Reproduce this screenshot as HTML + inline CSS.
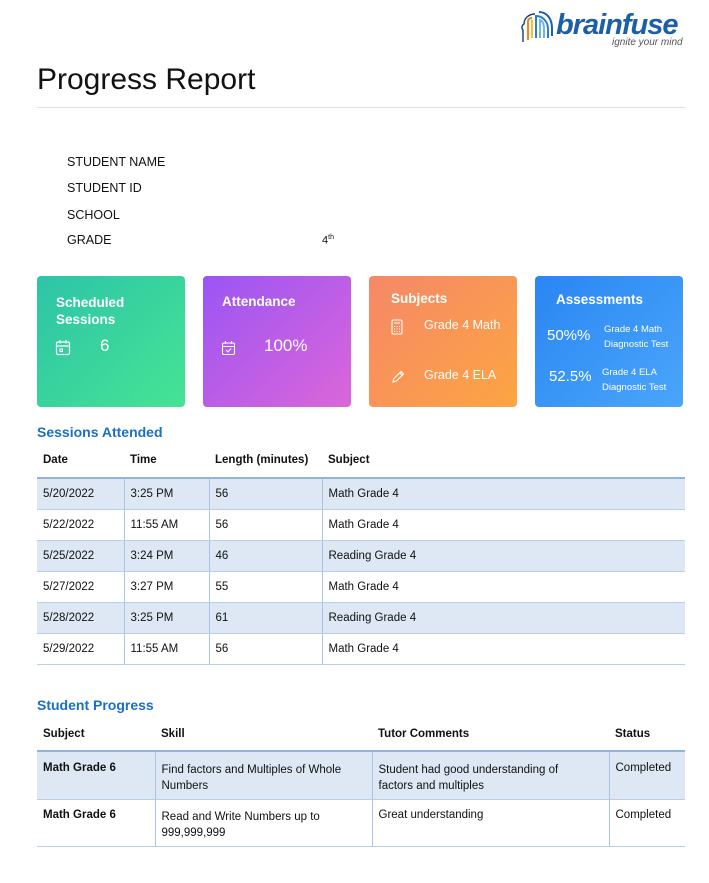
<!DOCTYPE html>
<html><head><meta charset="utf-8"><style>
*{margin:0;padding:0;box-sizing:border-box}
body{width:709px;height:883px;background:#fff;font-family:"Liberation Sans",sans-serif;color:#111;position:relative;overflow:hidden}
.a{position:absolute;white-space:nowrap}
.card{position:absolute;top:276px;width:148px;height:131px;border-radius:4px;color:#fff}
.ct{font-weight:bold;font-size:13.5px;position:absolute}
.h{color:#1a6fc6;font-weight:bold;font-size:14px}
table{position:absolute;border-collapse:collapse;font-size:11.5px;left:37px;width:648px}
td,th{text-align:left;padding:0 6px;vertical-align:top}
th{font-weight:bold}
tr.hd th{border-bottom:2px solid #8fb4de}
tr.s td{background:#dde8f4}
td{border-bottom:1px solid #b9cfe9;border-left:1px solid #a9c4e6}
td:first-child{border-left:none}
</style></head><body>
<!-- logo -->
<svg class="a" style="left:517px;top:8px" width="40" height="40" viewBox="0 0 40 40">
<path d="M6 34 V22 C4 20 5 17 7 16 C7 10 12 6 18 6" fill="none" stroke="#1a3d7c" stroke-width="1.4"/>
<path d="M11 32 V14 C11 11 13 10 15 10" fill="none" stroke="#e0902a" stroke-width="2.2"/>
<path d="M15 30 V12" fill="none" stroke="#f0c040" stroke-width="2.2"/>
<path d="M19 30 V8 C26 8 31 14 31 21 V30" fill="none" stroke="#2a7ed0" stroke-width="2"/>
<path d="M23 30 V12 C26 13 27 17 27 21 V30" fill="none" stroke="#6fb5ea" stroke-width="2"/>
<path d="M22 4 C30 4 35 11 35 20 V28" fill="none" stroke="#1e5fb0" stroke-width="2"/>
</svg>
<div class="a" style="left:556px;top:9px;font-size:29px;font-weight:bold;font-style:italic;color:#1a5fa8;letter-spacing:-1px">brainfuse</div>
<div class="a" style="left:612px;top:37px;font-size:10px;font-style:italic;color:#555">ignite your mind</div>
<div class="a" style="left:37px;top:63px;font-size:30px;color:#111">Progress Report</div>
<div class="a" style="left:37px;top:107px;width:648px;height:1px;background:#ddd"></div>
<div class="a" style="left:67px;top:155px;font-size:12.5px">STUDENT NAME</div>
<div class="a" style="left:67px;top:181px;font-size:12.5px">STUDENT ID</div>
<div class="a" style="left:67px;top:208px;font-size:12.5px">SCHOOL</div>
<div class="a" style="left:67px;top:233px;font-size:12.5px">GRADE</div>
<div class="a" style="left:322px;top:234px;font-size:11px">4<sup style="font-size:7px">th</sup></div>

<div class="card" style="left:37px;background:linear-gradient(135deg,#2ec4a8,#44e494)">
<div class="ct" style="left:19px;top:18px;line-height:17px">Scheduled<br>Sessions</div>
<svg class="a" style="left:18px;top:63px" width="16" height="17" viewBox="0 0 16 17"><rect x="1.5" y="3" width="13" height="12.5" rx="1.5" fill="none" stroke="#fff" stroke-width="1.2"/><path d="M1.5 7H14.5M5 1V4.5M11 1V4.5" stroke="#fff" stroke-width="1.2"/><rect x="5" y="10" width="2.5" height="2.5" fill="none" stroke="#fff"/></svg>
<div class="a" style="left:63px;top:60px;font-size:17px">6</div>
</div>
<div class="card" style="left:203px;background:linear-gradient(135deg,#9b55f5,#dc66d8)">
<div class="ct" style="left:19px;top:18px">Attendance</div>
<svg class="a" style="left:18px;top:64px" width="15" height="16" viewBox="0 0 15 16"><rect x="1.5" y="3" width="12" height="11.5" rx="1.5" fill="none" stroke="#fff" stroke-width="1.1"/><path d="M1.5 6.5H13.5M4.5 1V4M10.5 1V4M5 10l2 2 3-3.5" fill="none" stroke="#fff" stroke-width="1.1"/></svg>
<div class="a" style="left:61px;top:60px;font-size:17px">100%</div>
</div>
<div class="card" style="left:369px;background:linear-gradient(135deg,#f58868,#fda542)">
<div class="ct" style="left:22px;top:15px">Subjects</div>
<svg class="a" style="left:22px;top:43px" width="12" height="16" viewBox="0 0 12 16"><rect x="1" y="1" width="10" height="14" rx="1.5" fill="none" stroke="#fff" stroke-width="1.1"/><path d="M3 4h6M3 7.5h1M5.5 7.5h1M8 7.5h1M3 10h1M5.5 10h1M8 10h1M3 12.5h1M5.5 12.5h1M8 12.5h1" stroke="#fff" stroke-width="1"/></svg>
<div class="a" style="left:55px;top:42px;font-size:12.5px">Grade 4 Math</div>
<svg class="a" style="left:22px;top:94px" width="14" height="14" viewBox="0 0 14 14"><path d="M2 12l1-3.5L10 1.5l2.5 2.5L5.5 11z M9 3l2.5 2.5" fill="none" stroke="#fff" stroke-width="1.1"/></svg>
<div class="a" style="left:55px;top:92px;font-size:12.5px">Grade 4 ELA</div>
</div>
<div class="card" style="left:535px;background:linear-gradient(135deg,#2a86f2,#4aa6fa)">
<div class="ct" style="left:21px;top:16px">Assessments</div>
<div class="a" style="left:12px;top:51px;font-size:15px">50%%</div>
<div class="a" style="left:69px;top:47px;font-size:9.5px;line-height:14.5px">Grade 4 Math<br>Diagnostic Test</div>
<div class="a" style="left:14px;top:92px;font-size:15px">52.5%</div>
<div class="a" style="left:67px;top:90px;font-size:9.5px;line-height:14.5px">Grade 4 ELA<br>Diagnostic Test</div>
</div>

<div class="a h" style="left:37px;top:424px">Sessions Attended</div>
<table style="top:448px">
<colgroup><col style="width:87px"><col style="width:85px"><col style="width:113px"><col></colgroup>
<tr class="hd" style="height:30px"><th style="padding-top:6px">Date</th><th style="padding-top:6px">Time</th><th style="padding-top:6px">Length (minutes)</th><th style="padding-top:6px">Subject</th></tr>
<tr class="s" style="height:31px"><td style="padding-top:9px">5/20/2022</td><td style="padding-top:9px">3:25 PM</td><td style="padding-top:9px">56</td><td style="padding-top:9px">Math Grade 4</td></tr>
<tr style="height:31px"><td style="padding-top:9px">5/22/2022</td><td style="padding-top:9px">11:55 AM</td><td style="padding-top:9px">56</td><td style="padding-top:9px">Math Grade 4</td></tr>
<tr class="s" style="height:31px"><td style="padding-top:9px">5/25/2022</td><td style="padding-top:9px">3:24 PM</td><td style="padding-top:9px">46</td><td style="padding-top:9px">Reading Grade 4</td></tr>
<tr style="height:31px"><td style="padding-top:9px">5/27/2022</td><td style="padding-top:9px">3:27 PM</td><td style="padding-top:9px">55</td><td style="padding-top:9px">Math Grade 4</td></tr>
<tr class="s" style="height:31px"><td style="padding-top:9px">5/28/2022</td><td style="padding-top:9px">3:25 PM</td><td style="padding-top:9px">61</td><td style="padding-top:9px">Reading Grade 4</td></tr>
<tr style="height:31px"><td style="padding-top:9px">5/29/2022</td><td style="padding-top:9px">11:55 AM</td><td style="padding-top:9px">56</td><td style="padding-top:9px">Math Grade 4</td></tr>
</table>

<div class="a h" style="left:37px;top:697px">Student Progress</div>
<table style="top:721px">
<colgroup><col style="width:118px"><col style="width:217px"><col style="width:237px"><col></colgroup>
<tr class="hd" style="height:30px"><th style="padding-top:7px">Subject</th><th style="padding-top:7px">Skill</th><th style="padding-top:7px">Tutor Comments</th><th style="padding-top:7px">Status</th></tr>
<tr class="s" style="height:48px"><td style="padding-top:10px;font-weight:bold">Math Grade 6</td><td style="padding-top:10px;line-height:16px;white-space:normal">Find factors and Multiples of Whole Numbers</td><td style="padding-top:10px;line-height:16px">Student had good understanding of<br>factors and multiples</td><td style="padding-top:10px">Completed</td></tr>
<tr style="height:47px"><td style="padding-top:9px;font-weight:bold">Math Grade 6</td><td style="padding-top:9px;line-height:16px">Read and Write Numbers up to<br>999,999,999</td><td style="padding-top:9px">Great understanding</td><td style="padding-top:9px">Completed</td></tr>
</table>
</body></html>
